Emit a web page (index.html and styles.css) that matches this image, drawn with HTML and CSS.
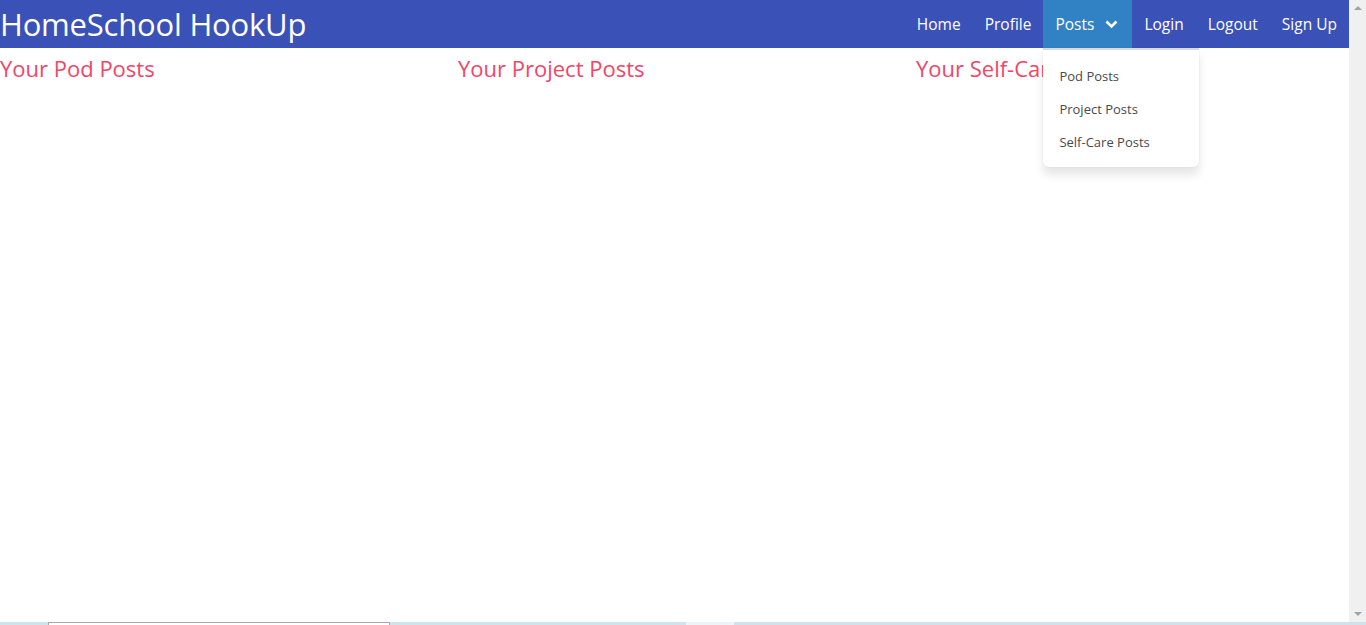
FILE: index.html
```html
<!DOCTYPE html>
<html>
<head>
<meta charset="utf-8">
<link rel="stylesheet" href="styles.css">
</head>
<body>
<div class="window">
  <div class="page">
    <nav class="navbar">
      <div class="brand">HomeSchool HookUp</div>
      <div class="menu">
        <a class="item">Home</a>
        <a class="item">Profile</a>
        <div class="item dropdown">
          <span>Posts</span>
          <svg class="chev" width="13" height="9" viewBox="0 0 13 9"><path d="M1.5 1.5 L6.5 6.5 L11.5 1.5" fill="none" stroke="#fff" stroke-width="2.6"/></svg>
          <div class="dropmenu">
            <a class="ditem">Pod Posts</a>
            <a class="ditem">Project Posts</a>
            <a class="ditem">Self-Care Posts</a>
          </div>
        </div>
        <a class="item">Login</a>
        <a class="item">Logout</a>
        <a class="item">Sign Up</a>
      </div>
    </nav>
    <div class="columns">
      <h2 class="coltitle">Your Pod Posts</h2>
      <h2 class="coltitle">Your Project Posts</h2>
      <h2 class="coltitle">Your Self-Care Posts</h2>
    </div>
  </div>
  <div class="scrollbar">
    <div class="arrow up"></div>
    <div class="arrow down"></div>
  </div>
</div>
<div class="taskstrip">
  <div class="seg a"></div>
  <div class="seg b"></div>
  <div class="seg c"></div>
  <div class="seg d"></div>
</div>
</body>
</html>
```

FILE: styles.css
```css
html, body {
  margin: 0;
  padding: 0;
  height: 625px;
  overflow: hidden;
  background: #fff;
  font-family: "Open Sans", "Noto Sans", sans-serif;
}
.window {
  display: flex;
  height: 622px;
}
.page {
  width: 1349px;
  overflow: hidden;
}
.navbar {
  height: 48px;
  background: #3a51b8;
  display: flex;
  align-items: stretch;
  justify-content: space-between;
}
.brand {
  color: #fff;
  font-size: 31px;
  line-height: 48px;
  letter-spacing: -0.2px;
}
.menu {
  display: flex;
  align-items: stretch;
}
.item {
  color: #fff;
  font-size: 15.5px;
  padding: 0 12px;
  display: flex;
  align-items: center;
  cursor: pointer;
}
.item.first {
  padding-left: 12px;
}
.dropdown {
  position: relative;
  background: #3182c4;
  width: 89px;
  box-sizing: border-box;
}
.chev {
  margin-left: 11px;
  margin-top: 1px;
}
.dropmenu {
  position: absolute;
  top: 48px;
  left: 0;
  width: 156px;
  background: #fff;
  border-top: 2px solid #dbdbdb;
  border-radius: 0 0 6px 6px;
  box-shadow: 0 8px 10px rgba(10,10,10,0.1), 0 0 0 1px rgba(10,10,10,0.02);
  padding: 17px 0 1px;
  display: flex;
  flex-direction: column;
}
.ditem {
  color: #4a4a4a;
  font-size: 13px;
  padding: 0 16px;
  height: 33px;
  line-height: 18px;
}
.columns {
  display: grid;
  grid-template-columns: 458px 458px 458px;
}
.coltitle {
  margin: 0;
  color: #f14668;
  font-weight: 400;
  font-size: 22px;
  line-height: 40px;
  white-space: nowrap;
}
.scrollbar {
  width: 17px;
  background: #f0f0f0;
  display: flex;
  flex-direction: column;
  justify-content: space-between;
  align-items: center;
  padding: 6px 0;
  box-sizing: border-box;
}
.arrow {
  width: 0;
  height: 0;
  border-left: 4px solid transparent;
  border-right: 4px solid transparent;
}
.arrow.up { border-bottom: 4px solid #a3a3a3; }
.arrow.down { border-top: 4px solid #a3a3a3; }
.taskstrip {
  height: 3px;
  display: flex;
}
.seg.a { width: 48px; background: #cfe5ec; }
.seg.b { width: 342px; background: #fff; border-top: 1px solid #a8a8a8; border-left: 1px solid #a8a8a8; border-right: 1px solid #a8a8a8; box-sizing: border-box; }
.seg.c { width: 296px; background: #cfe4ec; }
.seg.d { flex: 1; background: linear-gradient(90deg, #eef4f7 0 48px, #d2e2ec 48px); }
```
